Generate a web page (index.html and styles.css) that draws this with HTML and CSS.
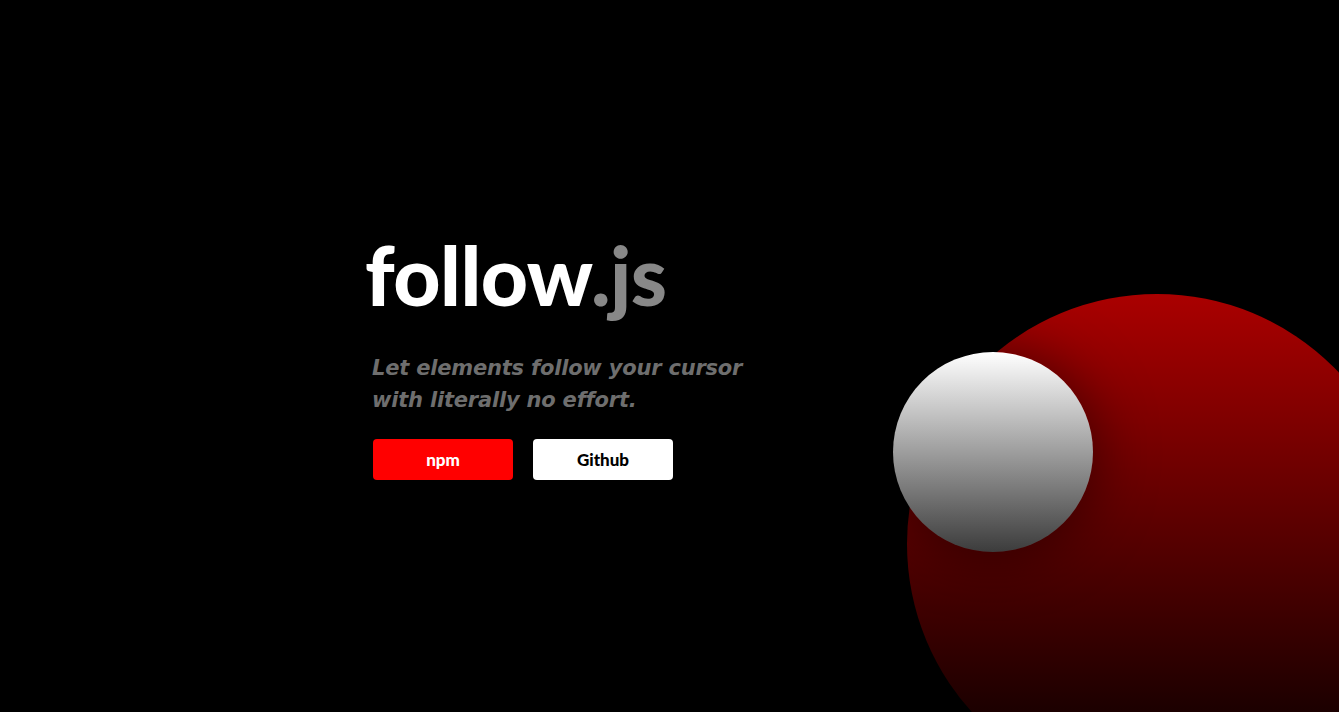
FILE: index.html
```html
<!DOCTYPE html>
<html lang="en">
<head>
<meta charset="utf-8">
<title>follow.js</title>
<link rel="stylesheet" href="styles.css">
</head>
<body>
<main class="hero">
  <section class="intro">
    <h1 class="title">follow<span class="ext">.js</span></h1>
    <p class="tagline">Let elements follow your cursor<br>with literally no effort.</p>
    <div class="actions">
      <a class="btn btn-npm" href="#">npm</a>
      <a class="btn btn-github" href="#">Github</a>
    </div>
  </section>
  <div class="ball ball-red"></div>
  <div class="ball ball-white"></div>
</main>
</body>
</html>
```
FILE: styles.css
```css
html, body {
  margin: 0;
  padding: 0;
  background: #000;
  height: 100%;
  overflow: hidden;
}
.hero {
  position: relative;
  width: 100%;
  height: 712px;
  overflow: hidden;
  display: flex;
  align-items: flex-start;
  padding-left: 365px;
  padding-top: 224px;
  box-sizing: border-box;
}
.intro {
  display: flex;
  flex-direction: column;
  position: relative;
  z-index: 2;
}
.title {
  margin: 0;
  font-family: "Lato", "Noto Sans", sans-serif;
  font-weight: 900;
  font-size: 82px;
  line-height: 100px;
  color: #fff;
  letter-spacing: -0.5px;
}
.ext {
  color: #888;
}
.tagline {
  margin: 28px 0 0 7px;
  font-family: "DejaVu Sans", "Lato", sans-serif;
  font-style: italic;
  font-weight: 700;
  font-size: 21px;
  line-height: 32px;
  color: #6e6e6e;
  letter-spacing: -0.2px;
}
.actions {
  display: flex;
  gap: 20px;
  margin: 23px 0 0 8px;
}
.btn {
  display: flex;
  align-items: center;
  justify-content: center;
  width: 140px;
  height: 41px;
  border-radius: 4px;
  font-family: "Lato", "Liberation Sans", sans-serif;
  font-weight: 900;
  font-size: 17px;
  text-decoration: none;
}
.btn-npm {
  background: #ff0000;
  color: #fff;
}
.btn-github {
  background: #fff;
  color: #000;
}
.ball {
  position: absolute;
  border-radius: 50%;
}
.ball-red {
  left: 907px;
  top: 294px;
  width: 500px;
  height: 500px;
  background: linear-gradient(to bottom, #aa0000, #000);
}
.ball-white {
  left: 893px;
  top: 352px;
  width: 200px;
  height: 200px;
  background: linear-gradient(to bottom, #fff, #3c3c3c);
  box-shadow: 0 0 60px rgba(0, 0, 0, 0.5);
}
```
